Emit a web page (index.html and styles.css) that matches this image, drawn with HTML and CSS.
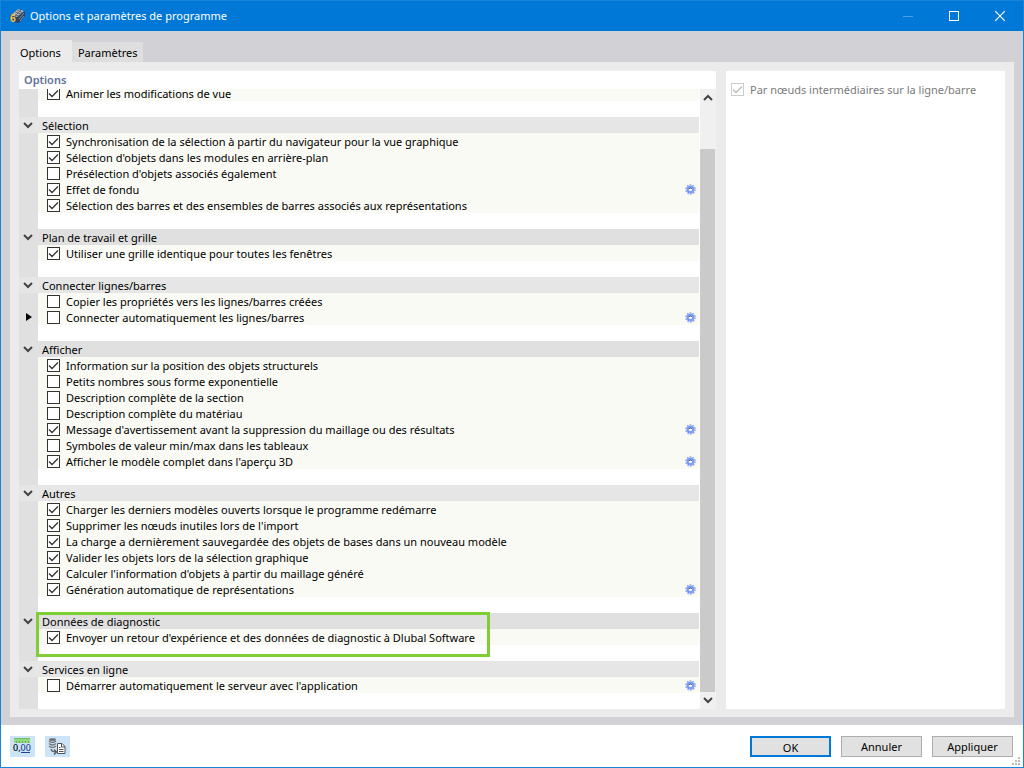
FILE: index.html
```
<!DOCTYPE html>
<html lang="fr">
<head>
    <meta charset="UTF-8">
    <meta name="viewport" content="width=device-width, initial-scale=1.0">
    <title>Options et paramètres de programme</title>
    <link rel="stylesheet" href="styles.css">
</head>
<body>

    <!-- icons used several times -->
    <svg class="defs" width="0" height="0">
        <symbol id="chevron" viewBox="0 0 10 7">
            <path d="M1 1 L5 5 L9 1" fill="none" stroke="#444" stroke-width="2"/>
        </symbol>
        <symbol id="gear" viewBox="0 0 11 11">
            <circle cx="5.5" cy="5.5" r="4.6" fill="none" stroke="#8ea5f0" stroke-width="1.5" stroke-dasharray="1.6 1.29"/>
            <circle cx="5.5" cy="5.5" r="2.8" fill="#fff" stroke="#7f9cf5" stroke-width="2.4"/>
            <path d="M4.3 4.6 Q5.5 3.4 6.7 4.6" fill="none" stroke="#3d4354" stroke-width="1"/>
        </symbol>
    </svg>

    <div class="window">

        <header class="titlebar">
            <svg class="app-icon" width="17" height="17" viewBox="0 0 17 17">
                <path d="M1 8 L9 1 L16 4 L16 8 L10 15 L5 14 Z" fill="#2c4260"/>
                <path d="M2 7 L9 1 L15 3 L8 9 Z" fill="#b4bac2"/>
                <path d="M4 6 L10 8 M6 4 L12 6 M8 2 L14 5 M5 9 L12 2" stroke="#5d6877" stroke-width="1"/>
                <path d="M10 11 L15 5 M11 13 L15 8" stroke="#8190a5" stroke-width="1"/>
                <text class="app-badge" x="1" y="14">6</text>
            </svg>
            <h1>Options et paramètres de programme</h1>
            <div class="window-buttons">
                <button type="button" aria-label="Réduire" disabled>
                    <svg width="10" height="10" viewBox="0 0 10 10"><path d="M0 5.5 H10" stroke="#4aa0e4"/></svg>
                </button>
                <button type="button" aria-label="Agrandir">
                    <svg width="10" height="10" viewBox="0 0 10 10"><rect x="0.5" y="0.5" width="9" height="9" fill="none" stroke="#fff"/></svg>
                </button>
                <button type="button" aria-label="Fermer">
                    <svg width="10" height="10" viewBox="0 0 10 10"><path d="M0 0 L10 10 M10 0 L0 10" stroke="#fff" stroke-width="1.2"/></svg>
                </button>
            </div>
        </header>

        <main class="content">

            <div class="tabs" role="tablist">
                <button type="button" class="tab active" role="tab" aria-selected="true">Options</button>
                <button type="button" class="tab" role="tab" aria-selected="false">Paramètres</button>
            </div>

            <div class="panels">

                <section class="panel panel-list">
                    <h2>Options</h2>
                    <div class="list-wrap">
                        <div class="list">

                            <div class="group">
                                <div class="row"><label><input type="checkbox" checked>Animer les modifications de vue</label></div>
                            </div>

                            <div class="group">
                                <h3 class="light"><button type="button" class="toggle" aria-label="Replier"><svg><use href="#chevron"/></svg></button>Sélection</h3>
                                <div class="row"><label><input type="checkbox" checked>Synchronisation de la sélection à partir du navigateur pour la vue graphique</label></div>
                                <div class="row"><label><input type="checkbox" checked>Sélection d'objets dans les modules en arrière-plan</label></div>
                                <div class="row"><label><input type="checkbox">Présélection d'objets associés également</label></div>
                                <div class="row"><label><input type="checkbox" checked>Effet de fondu</label><button type="button" class="gear" aria-label="Réglages"><svg><use href="#gear"/></svg></button></div>
                                <div class="row"><label><input type="checkbox" checked>Sélection des barres et des ensembles de barres associés aux représentations</label></div>
                            </div>

                            <div class="group">
                                <h3><button type="button" class="toggle" aria-label="Replier"><svg><use href="#chevron"/></svg></button>Plan de travail et grille</h3>
                                <div class="row"><label><input type="checkbox" checked>Utiliser une grille identique pour toutes les fenêtres</label></div>
                            </div>

                            <div class="group">
                                <h3 class="light"><button type="button" class="toggle" aria-label="Replier"><svg><use href="#chevron"/></svg></button>Connecter lignes/barres</h3>
                                <div class="row"><label><input type="checkbox">Copier les propriétés vers les lignes/barres créées</label></div>
                                <div class="row current"><label><input type="checkbox">Connecter automatiquement les lignes/barres</label><button type="button" class="gear" aria-label="Réglages"><svg><use href="#gear"/></svg></button></div>
                            </div>

                            <div class="group">
                                <h3><button type="button" class="toggle" aria-label="Replier"><svg><use href="#chevron"/></svg></button>Afficher</h3>
                                <div class="row"><label><input type="checkbox" checked>Information sur la position des objets structurels</label></div>
                                <div class="row"><label><input type="checkbox">Petits nombres sous forme exponentielle</label></div>
                                <div class="row"><label><input type="checkbox">Description complète de la section</label></div>
                                <div class="row"><label><input type="checkbox">Description complète du matériau</label></div>
                                <div class="row"><label><input type="checkbox" checked>Message d'avertissement avant la suppression du maillage ou des résultats</label><button type="button" class="gear" aria-label="Réglages"><svg><use href="#gear"/></svg></button></div>
                                <div class="row"><label><input type="checkbox">Symboles de valeur min/max dans les tableaux</label></div>
                                <div class="row"><label><input type="checkbox" checked>Afficher le modèle complet dans l'aperçu 3D</label><button type="button" class="gear" aria-label="Réglages"><svg><use href="#gear"/></svg></button></div>
                            </div>

                            <div class="group">
                                <h3 class="light"><button type="button" class="toggle" aria-label="Replier"><svg><use href="#chevron"/></svg></button>Autres</h3>
                                <div class="row"><label><input type="checkbox" checked>Charger les derniers modèles ouverts lorsque le programme redémarre</label></div>
                                <div class="row"><label><input type="checkbox" checked>Supprimer les nœuds inutiles lors de l'import</label></div>
                                <div class="row"><label><input type="checkbox" checked>La charge a dernièrement sauvegardée des objets de bases dans un nouveau modèle</label></div>
                                <div class="row"><label><input type="checkbox" checked>Valider les objets lors de la sélection graphique</label></div>
                                <div class="row"><label><input type="checkbox" checked>Calculer l'information d'objets à partir du maillage généré</label></div>
                                <div class="row"><label><input type="checkbox" checked>Génération automatique de représentations</label><button type="button" class="gear" aria-label="Réglages"><svg><use href="#gear"/></svg></button></div>
                            </div>

                            <div class="group highlighted">
                                <h3><button type="button" class="toggle" aria-label="Replier"><svg><use href="#chevron"/></svg></button>Données de diagnostic</h3>
                                <div class="row"><label><input type="checkbox" checked>Envoyer un retour d'expérience et des données de diagnostic à Dlubal Software</label></div>
                            </div>

                            <div class="group">
                                <h3 class="light"><button type="button" class="toggle" aria-label="Replier"><svg><use href="#chevron"/></svg></button>Services en ligne</h3>
                                <div class="row"><label><input type="checkbox">Démarrer automatiquement le serveur avec l'application</label><button type="button" class="gear" aria-label="Réglages"><svg><use href="#gear"/></svg></button></div>
                            </div>

                        </div>

                        <div class="scrollbar">
                            <button type="button" class="up" aria-label="Défiler vers le haut"><svg><use href="#chevron"/></svg></button>
                            <div class="track"><div class="thumb"></div></div>
                            <button type="button" aria-label="Défiler vers le bas"><svg><use href="#chevron"/></svg></button>
                        </div>
                    </div>
                </section>

                <section class="panel panel-detail">
                    <label class="disabled"><input type="checkbox" checked disabled>Par nœuds intermédiaires sur la ligne/barre</label>
                </section>

            </div>
        </main>

        <footer class="footer">
            <button type="button" class="tool" aria-label="Unités et décimales">
                <svg width="25" height="21" viewBox="0 0 25 21">
                    <rect x="4" y="2" width="16" height="5" fill="#8fdc7c"/>
                    <path d="M4 2.5 H20" stroke="#74b865"/>
                    <path d="M6.5 5 V7 M9.5 5 V7 M12.5 5 V7 M15.5 5 V7 M18.5 5 V7" stroke="#6aa85f"/>
                    <text class="digits" x="3" y="15">0,<tspan class="decimals">00</tspan></text>
                    <path d="M11 16.5 H20" stroke="#263f8f"/>
                </svg>
            </button>
            <button type="button" class="tool" aria-label="Exporter les réglages">
                <svg width="25" height="21" viewBox="0 0 25 21">
                    <ellipse cx="7.5" cy="3.5" rx="3.5" ry="1.5" fill="#777"/>
                    <path d="M4 5 Q7.5 8 11 5 M4 7.5 Q7.5 10.5 11 7.5 M4 10 Q7.5 13 11 10" fill="none" stroke="#777" stroke-width="1.5"/>
                    <path d="M6 13 Q6.5 16 11 16 M9 13.5 L11.5 16 L9 18.5" fill="none" stroke="#555" stroke-width="1.3"/>
                    <path d="M12.5 7.5 H17 L20 10.5 V17.5 H12.5 Z" fill="#fff" stroke="#555"/>
                    <path d="M16.5 7.5 V11 H20 M14 11.5 H15.5 M14 13.5 H18.5 M14 15.5 H18.5" fill="none" stroke="#555"/>
                </svg>
            </button>
            <div class="actions">
                <button type="button" class="btn default">OK</button>
                <button type="button" class="btn">Annuler</button>
                <button type="button" class="btn">Appliquer</button>
            </div>
            <svg class="grip" width="8" height="8" viewBox="0 0 8 8" fill="#bdbdbd">
                <path d="M6 0h2v2h-2z M3 3h2v2h-2z M6 3h2v2h-2z M0 6h2v2h-2z M3 6h2v2h-2z M6 6h2v2h-2z"/>
            </svg>
        </footer>

    </div>

</body>
</html>
```

FILE: styles.css
```
*,
*::after {
    box-sizing: border-box;
}

body {
    margin: 0;
    font-family: "Noto Sans", "Open Sans", sans-serif;
    font-size: 11px;
    line-height: 18px;
    color: #000;
}

h1, h2, h3 {
    margin: 0;
    font-size: 11px;
    font-weight: normal;
}

button {
    margin: 0;
    padding: 0;
    border: none;
    background: none;
    font: inherit;
    color: inherit;
}

svg {
    display: block;
}

.defs {
    position: absolute;
}

.window {
    display: flex;
    flex-direction: column;
    height: 100vh;
    border: 1px solid #1883d7;
    background: #d2d1d6;
}

/* title bar */

.titlebar {
    display: flex;
    align-items: center;
    height: 30px;
    padding-left: 8px;
    background: #0078d7;
    color: #fff;
}

.titlebar h1 {
    flex: 1;
    margin-left: 4px;
}

.app-badge {
    font-size: 10px;
    font-weight: bold;
    fill: #f0c040;
}

.window-buttons {
    display: flex;
}

.window-buttons button {
    display: flex;
    align-items: center;
    justify-content: center;
    width: 46px;
    height: 30px;
}

/* tabs */

.content {
    flex: 1;
    display: flex;
    flex-direction: column;
    min-height: 0;
    padding: 9px 9px 8px;
}

.tabs {
    display: flex;
    align-items: flex-end;
    height: 22px;
}

.tab {
    height: 20px;
    padding: 2px 6px 0;
    background: #dedede;
}

.tab.active {
    height: 22px;
    padding: 4px 11px 0 10px;
    background: #ebebeb;
}

.panels {
    flex: 1;
    display: flex;
    gap: 10px;
    min-height: 0;
    padding: 9px 9px 8px;
    background: #ebebeb;
}

.panel {
    background: #fff;
}

.panel-list {
    flex: 697;
    display: flex;
    flex-direction: column;
    min-width: 0;
}

.panel-list h2 {
    height: 18px;
    padding-left: 5px;
    font-weight: 600;
    color: #5f7199;
}

.panel-detail {
    flex: 279;
}

.panel-detail label {
    margin: 10px 5px;
}

/* option list, scrolled to its end */

.list-wrap {
    flex: 1;
    display: flex;
    gap: 1px;
    min-height: 0;
}

.list {
    flex: 1;
    display: flex;
    flex-direction: column;
    justify-content: flex-end;
    overflow: hidden;
}

.group {
    flex: none;
    position: relative;
    padding-bottom: 16px;
    border-left: 19px solid #e0e0e0;
}

.group h3 {
    display: flex;
    height: 16px;
    margin-left: -19px;
    background: #e0e0e0;
}

.group h3.light {
    background: #e6e6e6;
}

.toggle {
    display: flex;
    align-items: center;
    width: 23px;
    height: 16px;
    padding-left: 4px;
}

.toggle svg,
.scrollbar svg {
    width: 10px;
    height: 7px;
}

.row {
    display: flex;
    align-items: center;
    justify-content: space-between;
    height: 16px;
    padding: 0 3px 0 9px;
    background: #f9faf4;
}

.row.current::before {
    content: "";
    position: absolute;
    left: -12px;
    border: 4px solid transparent;
    border-left: 6px solid #000;
    border-right: none;
}

label {
    display: flex;
    align-items: flex-start;
    gap: 6px;
    height: 16px;
}

label.disabled {
    color: #7a7a7a;
}

input[type="checkbox"] {
    appearance: none;
    width: 13px;
    height: 13px;
    margin: 2px 0 0;
    border: 1px solid #333;
    background: #fff;
}

input[type="checkbox"]:checked {
    background: #fff url("data:image/svg+xml,%3Csvg xmlns='http://www.w3.org/2000/svg' viewBox='0 0 11 11'%3E%3Cpath d='M1 5.500 L4 8.500 L10 2.500' fill='none' stroke='%23333' stroke-width='1.300'/%3E%3C/svg%3E");
}

input[type="checkbox"]:disabled {
    border-color: #ccc;
    background-image: url("data:image/svg+xml,%3Csvg xmlns='http://www.w3.org/2000/svg' viewBox='0 0 11 11'%3E%3Cpath d='M1 5.500 L4 8.500 L10 2.500' fill='none' stroke='%23bbb' stroke-width='1.300'/%3E%3C/svg%3E");
}

.gear svg {
    width: 11px;
    height: 11px;
}

.highlighted::after {
    content: "";
    position: absolute;
    top: -1px;
    bottom: 4px;
    left: -2px;
    width: 454px;
    border: 3px solid #7fce35;
    pointer-events: none;
}

.scrollbar {
    display: flex;
    flex-direction: column;
    width: 16px;
    background: #f0f0f0;
}

.scrollbar button {
    display: flex;
    align-items: center;
    justify-content: center;
    height: 17px;
    padding-right: 1px;
}

.scrollbar .up svg {
    transform: rotate(180deg);
}

.track {
    flex: 1;
    padding: 43px 1px 0 0;
}

.thumb {
    height: 100%;
    background: #cacaca;
}

/* footer */

.footer {
    position: relative;
    display: flex;
    align-items: center;
    gap: 10px;
    height: 42px;
    padding: 0 10px 0 9px;
    background: #fff;
}

.tool {
    background: #cce4f7;
}

.digits {
    font-size: 9px;
    font-weight: 500;
}

.decimals {
    fill: #263f8f;
}

.actions {
    display: flex;
    gap: 10px;
    margin-left: auto;
}

.btn {
    width: 81px;
    height: 21px;
    padding-top: 1px;
    border: 1px solid #adadad;
    background: #e1e1e1;
}

.btn.default {
    border: 2px solid #0078d7;
}

.grip {
    position: absolute;
    right: 3px;
    bottom: 2px;
}
```
